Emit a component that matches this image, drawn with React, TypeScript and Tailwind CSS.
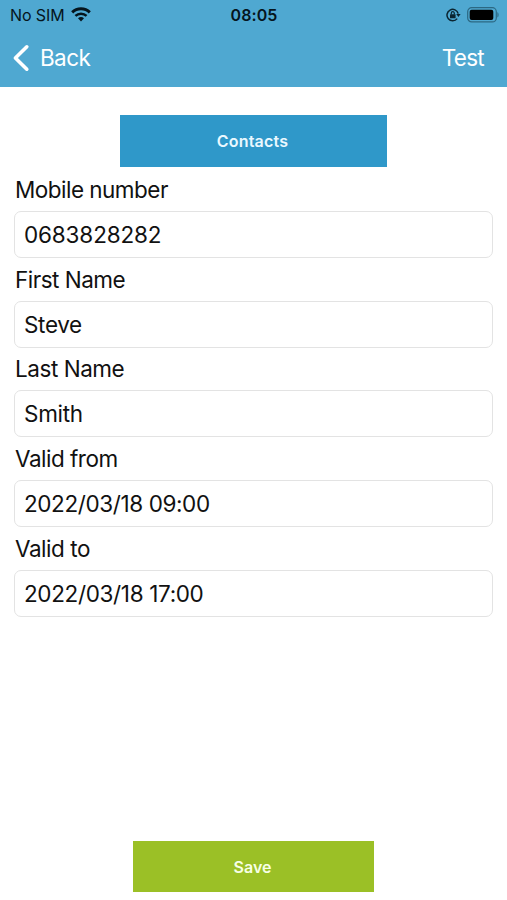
interface Field {
  id: string
  label: string
  value: string
  labelClass: string
  valueClass: string
}

const fields: Field[] = [
  { id: 'mobile', label: 'Mobile number', value: '0683828282', labelClass: 'tracking-[-0.52px]', valueClass: 'tracking-[-0.15px]' },
  { id: 'firstName', label: 'First Name', value: 'Steve', labelClass: 'tracking-[-0.5px]', valueClass: 'tracking-[-0.35px]' },
  { id: 'lastName', label: 'Last Name', value: 'Smith', labelClass: 'tracking-[-0.45px]', valueClass: 'tracking-[-0.3px]' },
  { id: 'validFrom', label: 'Valid from', value: '2022/03/18 09:00', labelClass: 'tracking-[-0.5px]', valueClass: 'tracking-[-0.4px]' },
  { id: 'validTo', label: 'Valid to', value: '2022/03/18 17:00', labelClass: 'tracking-[-0.45px]', valueClass: 'tracking-[-0.35px]' },
]

function WifiIcon() {
  return (
    <svg className="w-5 h-[15px]" viewBox="0 0 20 15" fill="none" stroke="#05151d" strokeWidth="3">
      <path d="M1.2 5.3C6 .7 14 .7 18.8 5.3" />
      <path d="M4.4 8.8C7.5 5.9 12.5 5.9 15.6 8.8" strokeWidth="2.5" />
      <path d="M7 11.3c1.8-1.6 4.2-1.6 6 0L10 14.4z" fill="#05151d" stroke="none" />
    </svg>
  )
}

function RotationLockIcon() {
  return (
    <svg className="w-[15px] h-[14px]" viewBox="0 0 15 14" fill="none" stroke="#0b2531">
      <path d="M12.2 5.6A5.7 5.7 0 1 0 11.2 10.6" strokeWidth="1.5" />
      <path d="M10.2 6h4.4l-2.2 3z" fill="#0b2531" stroke="none" />
      <rect x="4" y="6.2" width="5.6" height="4" rx=".5" fill="#0b2531" stroke="none" />
      <path d="M5.3 6.5V5.2a1.5 1.5 0 0 1 3 0v1.3" strokeWidth="1.2" />
    </svg>
  )
}

function BatteryIcon() {
  return (
    <svg className="w-[32px] h-4" viewBox="0 0 32 16" fill="none">
      <rect x=".7" y=".7" width="28.6" height="14.2" rx="4" stroke="#2c6883" strokeWidth="1.2" />
      <rect x="2.7" y="2.7" width="23.6" height="10.2" rx="2" fill="#000" />
      <path d="M30.4 5.3c1.6.5 1.6 4.7 0 5.2z" fill="#2c6883" />
    </svg>
  )
}

export default function App() {
  return (
    <div className="w-full h-[900px] bg-white flex flex-col font-['Inter',sans-serif] text-[#111]">
      <header className="h-[87px] bg-[#4fa8d1]">
        <div className="h-[29px] grid grid-cols-3 items-center pl-2.5 pr-2 text-[#05151d]">
          <div className="flex items-center gap-[6px]">
            <span className="text-[16px] tracking-[-0.1px]">No SIM</span>
            <WifiIcon />
          </div>
          <span className="text-center text-[16px] font-semibold -ml-px tracking-[0.1px]">08:05</span>
          <div className="flex items-center justify-end gap-[6px]">
            <RotationLockIcon />
            <BatteryIcon />
          </div>
        </div>
        <div className="h-[58px] flex items-center justify-between pl-3 pr-[23px] text-white text-[22.5px]">
          <button className="flex items-center gap-[10px]">
            <svg className="w-[18px] h-7" viewBox="0 0 18 28" fill="none" stroke="white" strokeWidth="3.6" strokeLinecap="round" strokeLinejoin="round">
              <path d="M14.8 2.8L3.4 14l11.4 11.2" />
            </svg>
            <span className="tracking-[-0.6px]">Back</span>
          </button>
          <button className="tracking-[-0.7px]">Test</button>
        </div>
      </header>

      <main className="flex-1 flex flex-col items-center pt-7 pb-2">
        <button className="w-[267px] h-[52px] bg-[#2f98c9] text-[#eaf8ff] text-[16px] font-semibold tracking-[0.2px] pr-0.5">
          Contacts
        </button>
        <form className="w-full px-3.5">
          {fields.map(field => (
            <div key={field.id} className="h-[89.7px]">
              <label htmlFor={field.id} className={`block h-[44px] pl-px leading-[46px] text-[22.5px] ${field.labelClass}`}>
                {field.label}
              </label>
              <input
                id={field.id}
                defaultValue={field.value}
                className={`block w-full h-[47px] px-[9px] border border-[#e3e3e3] rounded-[7px] text-[22.5px] outline-none ${field.valueClass}`}
              />
            </div>
          ))}
        </form>
        <button className="mt-auto w-[241px] h-[51px] bg-[#9bc026] text-[#f7ffe6] text-[16px] font-semibold pr-0.5">
          Save
        </button>
      </main>
    </div>
  )
}
